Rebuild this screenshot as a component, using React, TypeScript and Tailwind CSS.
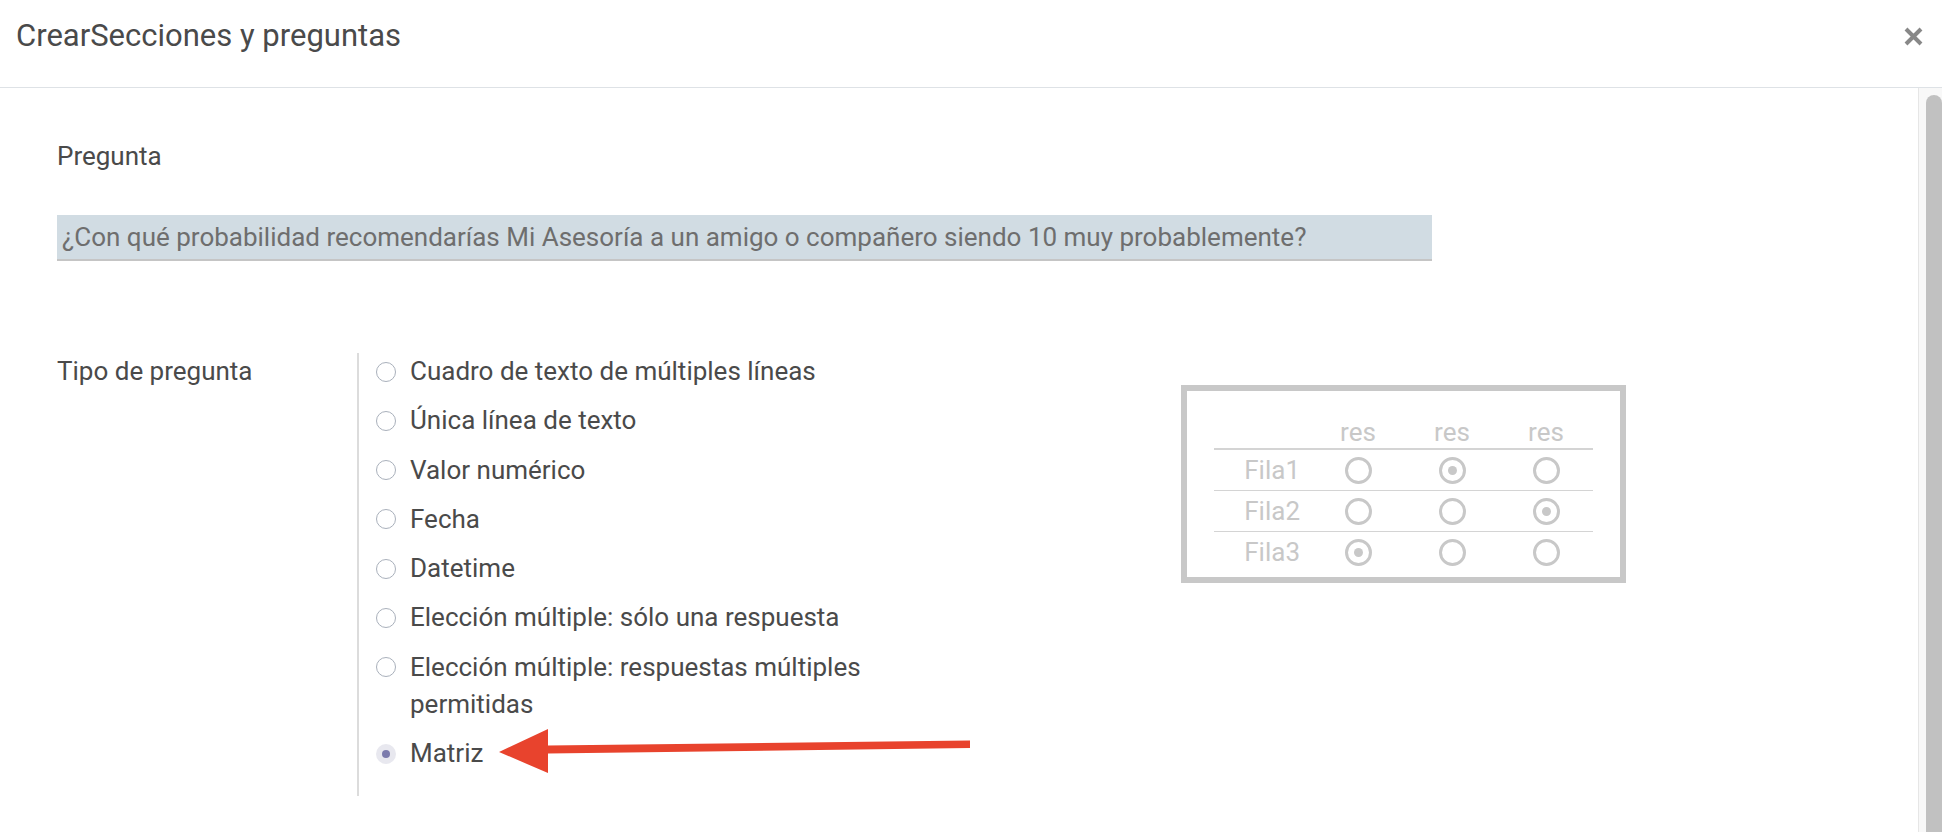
import React from 'react';

const questionTypes = [
  'Cuadro de texto de múltiples líneas',
  'Única línea de texto',
  'Valor numérico',
  'Fecha',
  'Datetime',
  'Elección múltiple: sólo una respuesta',
  'Elección múltiple: respuestas múltiples permitidas',
  'Matriz',
];

const matrixRows = [
  { name: 'Fila1', checked: 1 },
  { name: 'Fila2', checked: 2 },
  { name: 'Fila3', checked: 0 },
];

function PreviewRadio({ on }: { on: boolean }) {
  return (
    <span className="inline-flex h-[27px] w-[27px] items-center justify-center rounded-full border-[3px] border-[#c8c8c8]">
      {on && <span className="h-[9px] w-[9px] rounded-full bg-[#c8c8c8]" />}
    </span>
  );
}

function MatrixPreview() {
  return (
    <div className="w-[445px] border-[6px] border-[#c8c8c8] bg-white pl-[27px] pt-[22px] pb-[5px] text-[26px] text-[#c8c8c8]">
      <div className="w-[379px]">
        {/* header */}
        <div className="grid h-[37px] grid-cols-[97px_94px_94px_94px] items-center border-b-2 border-[#d4d4d4]">
          <span />
          <span className="text-center">res</span>
          <span className="text-center">res</span>
          <span className="text-center">res</span>
        </div>
        {matrixRows.map((row, i) => (
          <div
            key={row.name}
            className={
              i < matrixRows.length - 1
                ? 'grid h-[41px] grid-cols-[97px_94px_94px_94px] items-center border-b border-[#d4d4d4]'
                : 'grid h-[40px] grid-cols-[97px_94px_94px_94px] items-center'
            }
          >
            <span className="pr-[11px] text-right">{row.name}</span>
            {[0, 1, 2].map((c) => (
              <span key={c} className="flex justify-center">
                <PreviewRadio on={row.checked === c} />
              </span>
            ))}
          </div>
        ))}
      </div>
    </div>
  );
}

export default function App() {
  return (
    <div className="relative h-[832px] w-full overflow-hidden bg-white font-['Roboto',sans-serif] text-[#4a4a4a]">
      {/* Header */}
      <header className="flex h-[88px] items-start justify-between border-b border-[#dee2e6] pl-[16px] pr-[19px]">
        <h4 className="pt-[18px] text-[31px] leading-[36px] text-[#4a4a4a]">CrearSecciones y preguntas</h4>
        <button className="mt-[27px]" aria-label="Cerrar">
          <svg width="19" height="19" viewBox="0 0 19 19">
            <path d="M2 2 L17 17 M17 2 L2 17" stroke="#888888" strokeWidth="4" strokeLinecap="butt" />
          </svg>
        </button>
      </header>

      <div className="flex h-[744px]">
        {/* Body */}
        <main className="flex-1 pl-[57px] pt-[50px]">
          <label className="block text-[26px] leading-[37px]">Pregunta</label>
          <div className="mt-[40px] flex h-[46px] w-[1375px] items-center border-b-2 border-[#c5c5c5] bg-[#d1dce3] pl-[5px] text-[26px] text-[#6e6e6e]">
            ¿Con qué probabilidad recomendarías Mi Asesoría a un amigo o compañero siendo 10 muy probablemente?
          </div>

          <div className="mt-[92px] flex items-start">
            <div className="w-[300px] text-[26px] leading-[37px]">Tipo de pregunta</div>
            <div className="flex w-[540px] flex-col gap-[12.3px] border-l-2 border-[#dcdcdc] pb-[24px] pl-[17px]">
              {questionTypes.map((t) => {
                const selected = t === 'Matriz';
                return (
                  <label key={t} className="flex items-start gap-[14px] text-[26px] leading-[37px]">
                    {selected ? (
                      <span className="mt-[8.5px] flex h-[20px] w-[20px] shrink-0 items-center justify-center rounded-full bg-[#e8e8ef]">
                        <span className="h-[8px] w-[8px] rounded-full bg-[#7c7bad]" />
                      </span>
                    ) : (
                      <span className="mt-[8.5px] h-[20px] w-[20px] shrink-0 rounded-full border-[1.6px] border-[#a9b0bb]" />
                    )}
                    <span>{t}</span>
                  </label>
                );
              })}
            </div>
            <div className="ml-[284px] mt-[32px]">
              <MatrixPreview />
            </div>
          </div>
        </main>

        {/* Scrollbar */}
        <div className="w-[24px] border-l border-[#e6e6e6] bg-[#f8f8f8] pl-[7px] pt-[7px]">
          <div className="h-full w-[16px] rounded-t-full bg-[#c1c1c1]" />
        </div>
      </div>

      {/* Annotation arrow */}
      <svg className="pointer-events-none absolute left-[490px] top-[721px]" width="490" height="60" viewBox="0 0 490 60">
        <polygon points="9,31 58,8 58,24.5 480,19.5 480,27 58,32.5 58,52" fill="#e8432d" />
      </svg>
    </div>
  );
}
